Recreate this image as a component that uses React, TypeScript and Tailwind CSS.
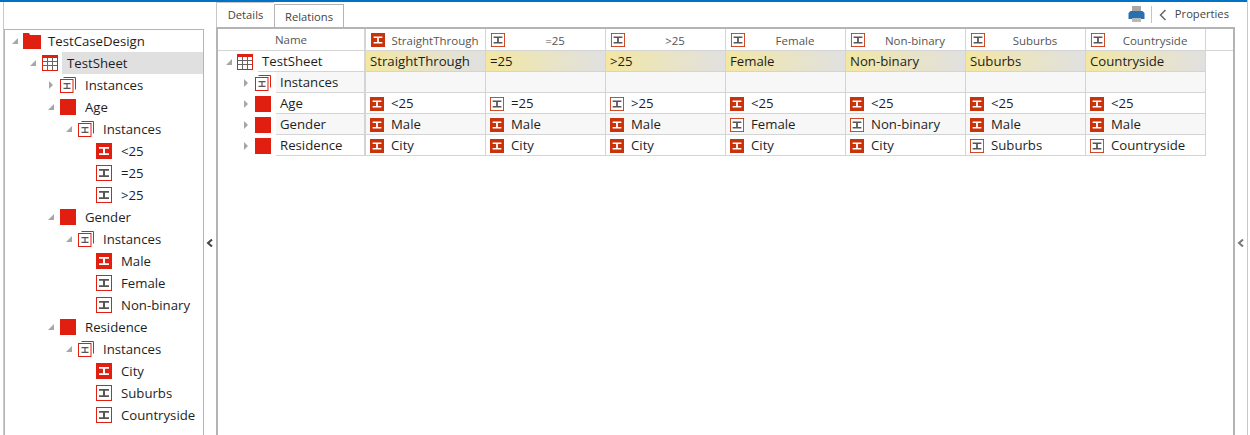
import React from 'react';

const RED = '#e01f10';

function Caret({ open }: { open?: boolean }) {
  return (
    <svg width="8" height="10" viewBox="0 0 8 10" className="shrink-0">
      {open ? <path d="M6 2v6H0z" fill="#a6a6a6" /> : <path d="M1 1l4 4-4 4z" fill="#a6a6a6" />}
    </svg>
  );
}

function Iface({ filled, dark, size = 16 }: { filled?: boolean; dark?: boolean; size?: number }) {
  const c = dark ? '#c8330c' : RED;
  return (
    <svg width={size} height={size} viewBox="0 0 16 16" className="shrink-0">
      {filled ? (
        <rect width="16" height="16" fill={c} />
      ) : (
        <rect x="0.5" y="0.5" width="15" height="15" fill="#fff" stroke={c} />
      )}
      <path d="M3 4h10v1.7H9v4.6h4V12H3v-1.7h4V5.7H3z" fill={filled ? '#fff' : '#555'} />
    </svg>
  );
}

function Stack() {
  return (
    <svg width="16" height="16" viewBox="0 0 16 16" className="shrink-0">
      <path d="M3.5 0.5h12v12" fill="none" stroke={RED} />
      <rect x="0.5" y="2.5" width="12.5" height="13" fill="#fff" stroke={RED} />
      <path d="M3.5 6h7v1.3H7.6v3.4h2.9V12h-7v-1.3h2.9V7.3H3.5z" fill="#555" />
    </svg>
  );
}

function Grid() {
  return (
    <svg width="16" height="16" viewBox="0 0 16 16" className="shrink-0">
      <rect x="0.5" y="0.5" width="15" height="15" fill="#fff" stroke={RED} />
      <path d="M0 0h16v3H0z" fill={RED} />
      <path d="M5.5 3v12M10.5 3v12M1 6.5h14M1 10.5h14" stroke="#666" fill="none" />
    </svg>
  );
}

function Square() {
  return <div className="w-4 h-4 shrink-0 bg-[#e01f10]" />;
}

function Folder() {
  return (
    <svg width="18" height="16" viewBox="0 0 18 16" className="shrink-0">
      <path d="M0 0h6l1 2h11v14H0z" fill={RED} />
    </svg>
  );
}

function Chevron({ color }: { color: string }) {
  return (
    <svg width="8" height="8" viewBox="0 0 8 8">
      <path d="M6 0.5L2 4l4 3.5" fill="none" stroke={color} strokeWidth="2" />
    </svg>
  );
}

type TreeItem = { pad: string; caret?: boolean; closed?: boolean; icon: React.ReactNode; gap: string; label: string; sel?: boolean };

const tree: TreeItem[] = [
  { pad: 'pl-[7px]', caret: true, icon: <Folder />, gap: 'ml-[7px]', label: 'TestCaseDesign' },
  { pad: 'pl-[25px]', caret: true, icon: <Grid />, gap: 'ml-1', label: 'TestSheet', sel: true },
  { pad: 'pl-[43px]', caret: true, closed: true, icon: <Stack />, gap: 'ml-[9px]', label: 'Instances' },
  { pad: 'pl-[43px]', caret: true, icon: <Square />, gap: 'ml-[9px]', label: 'Age' },
  { pad: 'pl-[61px]', caret: true, icon: <Stack />, gap: 'ml-[9px]', label: 'Instances' },
  { pad: 'pl-[87px]', icon: <Iface filled />, gap: 'ml-[9px]', label: '<25' },
  { pad: 'pl-[87px]', icon: <Iface />, gap: 'ml-[9px]', label: '=25' },
  { pad: 'pl-[87px]', icon: <Iface />, gap: 'ml-[9px]', label: '>25' },
  { pad: 'pl-[43px]', caret: true, icon: <Square />, gap: 'ml-[9px]', label: 'Gender' },
  { pad: 'pl-[61px]', caret: true, icon: <Stack />, gap: 'ml-[9px]', label: 'Instances' },
  { pad: 'pl-[87px]', icon: <Iface filled />, gap: 'ml-[9px]', label: 'Male' },
  { pad: 'pl-[87px]', icon: <Iface />, gap: 'ml-[9px]', label: 'Female' },
  { pad: 'pl-[87px]', icon: <Iface />, gap: 'ml-[9px]', label: 'Non-binary' },
  { pad: 'pl-[43px]', caret: true, icon: <Square />, gap: 'ml-[9px]', label: 'Residence' },
  { pad: 'pl-[61px]', caret: true, icon: <Stack />, gap: 'ml-[9px]', label: 'Instances' },
  { pad: 'pl-[87px]', icon: <Iface filled />, gap: 'ml-[9px]', label: 'City' },
  { pad: 'pl-[87px]', icon: <Iface />, gap: 'ml-[9px]', label: 'Suburbs' },
  { pad: 'pl-[87px]', icon: <Iface />, gap: 'ml-[9px]', label: 'Countryside' },
];

const columns: { label: string; filled?: boolean }[] = [
  { label: 'StraightThrough', filled: true },
  { label: '=25' },
  { label: '>25' },
  { label: 'Female' },
  { label: 'Non-binary' },
  { label: 'Suburbs' },
  { label: 'Countryside' },
];

type Cell = [string, boolean];
const F = (s: string): Cell => [s, true];
const O = (s: string): Cell => [s, false];

const rows: { name: string; cells: Cell[]; alt?: boolean }[] = [
  { name: 'Age', cells: [F('<25'), O('=25'), O('>25'), F('<25'), F('<25'), F('<25'), F('<25')] },
  { name: 'Gender', alt: true, cells: [F('Male'), F('Male'), F('Male'), O('Female'), O('Non-binary'), F('Male'), F('Male')] },
  { name: 'Residence', cells: [F('City'), F('City'), F('City'), F('City'), F('City'), O('Suburbs'), O('Countryside')] },
];

export default function App() {
  return (
    <div className="w-[1250px] h-[435px] overflow-hidden bg-white text-[13.2px] text-[#1e1e1e] font-['Open_Sans','Noto_Sans',sans-serif]">
      <div className="w-[1248px] h-full flex flex-col border-r border-[#c8c8c8]">
        <div className="h-[2px] bg-[#0072c6] shrink-0" />
        <div className="flex flex-1 min-h-0">
          {/* left tree */}
          <div className="w-[201px] ml-[3px] shrink-0 border-l border-[#c8c8c8] pt-[27px]">
            <div className="h-full border-l border-t border-r border-[#b4b4b4]">
              {tree.map((t, i) => (
                <div key={i} className={`flex items-center h-[22px] ${t.pad}`}>
                  {t.caret && <Caret open={!t.closed} />}
                  <div className={`flex items-center ${i === 0 ? 'ml-[3px]' : 'ml-1'}`}>{t.icon}</div>
                  <div className={`${t.gap} flex-1 h-[22px] leading-[22px] ${t.sel ? 'bg-[#e0e0e0] pl-[5px]' : ''}`}>{t.label}</div>
                </div>
              ))}
            </div>
          </div>

          {/* left splitter */}
          <div className="w-[12px] shrink-0 flex items-center justify-center pt-[49px]">
            <Chevron color="#444" />
          </div>

          {/* main */}
          <div className="w-[1019px] shrink-0 flex flex-col">
            <div className="h-[25px] flex items-start shrink-0 text-[11.2px] text-[#444]">
              <div className="h-[25px] w-[58px] text-center leading-[24px] border-t border-l border-[#c8c8c8]">Details</div>
              <div className="h-[23px] w-[70px] mt-[2px] text-center leading-[23px] border border-b-0 border-[#b4b4b4]">Relations</div>
              <div className="ml-auto flex items-center h-[25px] pr-[6px]">
                <svg width="17" height="17" viewBox="0 0 17 17" className="mr-[6px]">
                  <path d="M4 0h9v5H4z" fill="#a8a8a8" />
                  <path d="M2.5 5h12L16.5 7v6H.5V7z" fill="#2a6fb0" />
                  <path d="M4 12h9v4H4z" fill="#b8b8b8" />
                </svg>
                <div className="w-px h-[17px] bg-[#c4c4c4] mr-[7px]" />
                <svg width="8" height="12" viewBox="0 0 8 12" className="mr-[8px]"><path d="M6.5 1L1.5 6l5 5" fill="none" stroke="#666" strokeWidth="1.5" /></svg>
                Properties
              </div>
            </div>
            <div className="flex-1 border-2 border-b-0 border-[#b4b4b4]">
              <div className="flex h-[22px] border-b border-[#d4d4d4] text-[11.5px] text-[#555]">
                <div className="w-[148px] shrink-0 border-r-2 border-[#d4d4d4] text-center leading-[22px]">Name</div>
                {columns.map((c, i) => (
                  <div key={i} className="w-[120px] shrink-0 border-r border-[#d4d4d4] flex items-center pl-[5px]">
                    <Iface filled={c.filled} dark size={14} />
                    <div className="flex-1 text-center whitespace-nowrap pt-[2px]">{c.label}</div>
                  </div>
                ))}
              </div>
              <div className="flex h-[21px]">
                <div className="w-[148px] shrink-0 border-r-2 border-[#d4d4d4] flex items-center pl-[8px]">
                  <Caret open />
                  <div className="ml-[3px]"><Grid /></div>
                  <div className="ml-[5px] pl-[4px] flex-1 h-[21px] leading-[20px] border-b border-[#d4d4d4]">TestSheet</div>
                </div>
                {columns.map((c, i) => (
                  <div key={i} className="w-[120px] shrink-0 border-r border-b border-[#d4d4d4] pl-[4px] leading-[20px] whitespace-nowrap bg-gradient-to-r from-[#f3e7a2] to-[#e0e0e0]">{c.label}</div>
                ))}
              </div>
              <div className="flex h-[21px]">
                <div className="w-[148px] shrink-0 border-r-2 border-[#d4d4d4] flex items-center pl-[25px]">
                  <Caret />
                  <div className="ml-[4px]"><Stack /></div>
                  <div className="ml-[5px] pl-[4px] flex-1 h-[21px] leading-[20px] bg-[#f7f7f7] border-b border-[#d4d4d4]">Instances</div>
                </div>
                {columns.map((c, i) => (
                  <div key={i} className="w-[120px] shrink-0 border-r border-b border-[#d4d4d4] bg-[#f7f7f7]" />
                ))}
              </div>
              {rows.map((r) => (
                <div key={r.name} className="flex h-[21px]">
                  <div className="w-[148px] shrink-0 border-r-2 border-[#d4d4d4] flex items-center pl-[25px]">
                    <Caret />
                    <div className="ml-[4px]"><Square /></div>
                    <div className={`ml-[5px] pl-[4px] flex-1 h-[21px] leading-[20px] border-b border-[#d4d4d4] ${r.alt ? 'bg-[#f7f7f7]' : ''}`}>{r.name}</div>
                  </div>
                  {r.cells.map((c, i) => (
                    <div key={i} className={`w-[120px] shrink-0 border-r border-b border-[#d4d4d4] flex items-center pl-[4px] pt-[2px] ${r.alt ? 'bg-[#f7f7f7]' : ''}`}>
                      <Iface filled={c[1]} dark size={14} />
                      <div className="ml-[7px] whitespace-nowrap">{c[0]}</div>
                    </div>
                  ))}
                </div>
              ))}
            </div>
          </div>

          {/* right splitter */}
          <div className="flex-1 flex items-center justify-center pt-[49px]">
            <Chevron color="#777" />
          </div>
        </div>
      </div>
    </div>
  );
}
